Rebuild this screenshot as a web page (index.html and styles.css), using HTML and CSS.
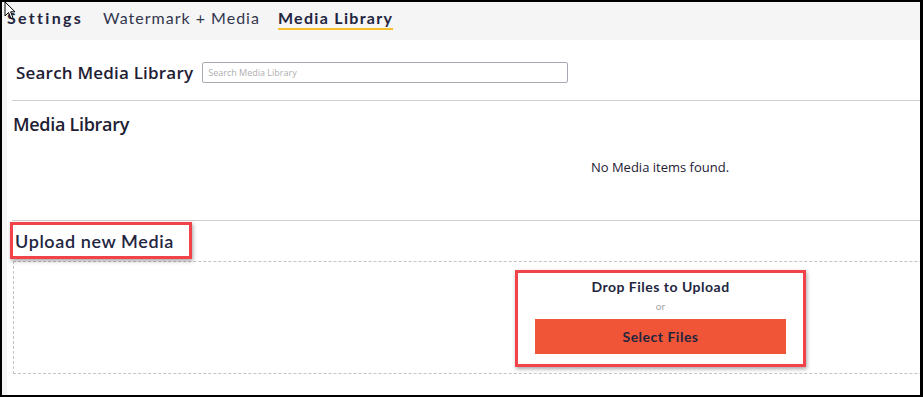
FILE: index.html
```html
<!DOCTYPE html>
<html lang="en">
    <head>
        <title>Media Library</title>
        <link rel="stylesheet" href="styles.css">
    </head>
    <body>
        <div class="frame">
            <header class="tabs">
                <span class="tab tab-title">Settings</span>
                <span class="tab">Watermark + Media</span>
                <span class="tab tab-active">Media Library</span>
            </header>
            <main class="content">
                <div class="inner">
                    <section class="search-row">
                        <label class="search-label" for="search">Search Media Library</label>
                        <input id="search" class="search-input" type="text" placeholder="Search Media Library">
                    </section>
                    <section class="library">
                        <h2 class="library-title">Media Library</h2>
                        <p class="empty">No Media items found.</p>
                    </section>
                    <section class="upload">
                        <h2 class="upload-title"><span class="mark">Upload new Media</span></h2>
                        <div class="dropzone">
                            <div class="drop-inner mark">
                                <p class="drop-text">Drop Files to Upload</p>
                                <p class="drop-or">or</p>
                                <button class="select-btn">Select Files</button>
                            </div>
                        </div>
                    </section>
                </div>
            </main>
        </div>
        <svg class="cursor" width="12" height="19" viewBox="0 0 12 19">
            <path d="M1 1 L1 15 L4.5 11.5 L7 17.5 L9 16.6 L6.6 10.8 L11 10.8 Z" fill="#fff" stroke="#000" stroke-width="1"/>
        </svg>
    </body>
</html>
```

FILE: styles.css
```css
body {
    margin: 0;
    background: #000;
    font-family: "Lato", "Open Sans", sans-serif;
    color: #23253f;
    overflow: hidden;
}

.frame {
    margin: 2px 3px 2px 2px;
    height: 393px;
    background: #f5f5f5;
    overflow: hidden;
    display: flex;
    flex-direction: column;
}

.tabs {
    height: 38px;
    display: flex;
    align-items: flex-start;
    padding-top: 6px;
    box-sizing: border-box;
    padding-left: 5px;
}

.tab {
    font-size: 16px;
    letter-spacing: 1px;
    color: #33354f;
    margin-right: 18px;
    line-height: 19px;
    padding-bottom: 1px;
}

.tab-title {
    font-weight: bold;
    color: #23253f;
    letter-spacing: 2.3px;
    margin-right: 20px;
}

.tab-active {
    font-weight: bold;
    color: #23253f;
    letter-spacing: 1.3px;
    border-bottom: 2px solid #f6bf2d;
}

.content {
    flex: 1;
    margin-left: 5px;
    background: #fff;
    overflow: hidden;
}

.inner {
    width: 1296px;
    padding-left: 5px;
}

.search-row {
    display: flex;
    align-items: center;
    height: 61px;
    padding: 5px 0 0 4px;
    box-sizing: border-box;
    border-bottom: 1px solid #cfcfcf;
}

.search-label {
    font-family: "Open Sans", sans-serif;
    font-weight: 600;
    font-size: 17px;
    letter-spacing: 0.2px;
    color: #1e2033;
    margin-right: 9px;
}

.search-input {
    width: 366px;
    height: 21px;
    box-sizing: border-box;
    border: 1px solid #a9a9b4;
    border-radius: 2px;
    padding: 0 5px;
    font-family: "Open Sans", sans-serif;
    font-size: 9px;
    color: #333;
}

.search-input::placeholder {
    color: #b0b0b0;
}

.library {
    height: 119px;
    border-bottom: 1px solid #cfcfcf;
}

.library-title {
    margin: 0;
    padding: 12px 0 0 1px;
    font-family: "Open Sans", sans-serif;
    font-weight: 600;
    font-size: 18px;
    line-height: 22px;
    color: #1e2033;
    letter-spacing: -0.3px;
}

.empty {
    margin: 0;
    padding-top: 23px;
    text-align: center;
    font-family: "Open Sans", sans-serif;
    font-size: 13px;
    color: #1e2033;
}

.upload-title {
    margin: 0;
    padding-top: 1px;
    height: 39px;
    font-size: 18px;
    font-weight: 600;
    letter-spacing: 0.6px;
}

.mark {
    border: 3px solid #f2434a;
    box-shadow: 1px 2px 4px rgba(0, 0, 0, 0.35);
}

.upload-title .mark {
    display: inline-block;
    margin-left: -2px;
    padding: 5px 15px 4px 2px;
    line-height: 22px;
}

.dropzone {
    height: 113px;
    box-sizing: border-box;
    border: 1px dashed #c4c4c4;
    margin-left: 1px;
    display: flex;
    justify-content: center;
    align-items: flex-start;
    padding-top: 8px;
}

.drop-inner {
    width: 291px;
    height: 97px;
    box-sizing: border-box;
    display: flex;
    flex-direction: column;
    align-items: center;
    padding-top: 5px;
}

.drop-text {
    margin: 0;
    font-size: 14px;
    font-weight: bold;
    letter-spacing: 0.5px;
    color: #23253f;
}

.drop-or {
    margin: 5px 0 7px;
    font-size: 10px;
    color: #a6a6a6;
}

.select-btn {
    width: 251px;
    height: 35px;
    border: none;
    background: #f05537;
    font-family: "Lato", sans-serif;
    font-size: 14px;
    font-weight: bold;
    letter-spacing: 0.5px;
    color: #23253f;
}

.cursor {
    position: absolute;
    left: 4px;
    top: 1px;
}
```
